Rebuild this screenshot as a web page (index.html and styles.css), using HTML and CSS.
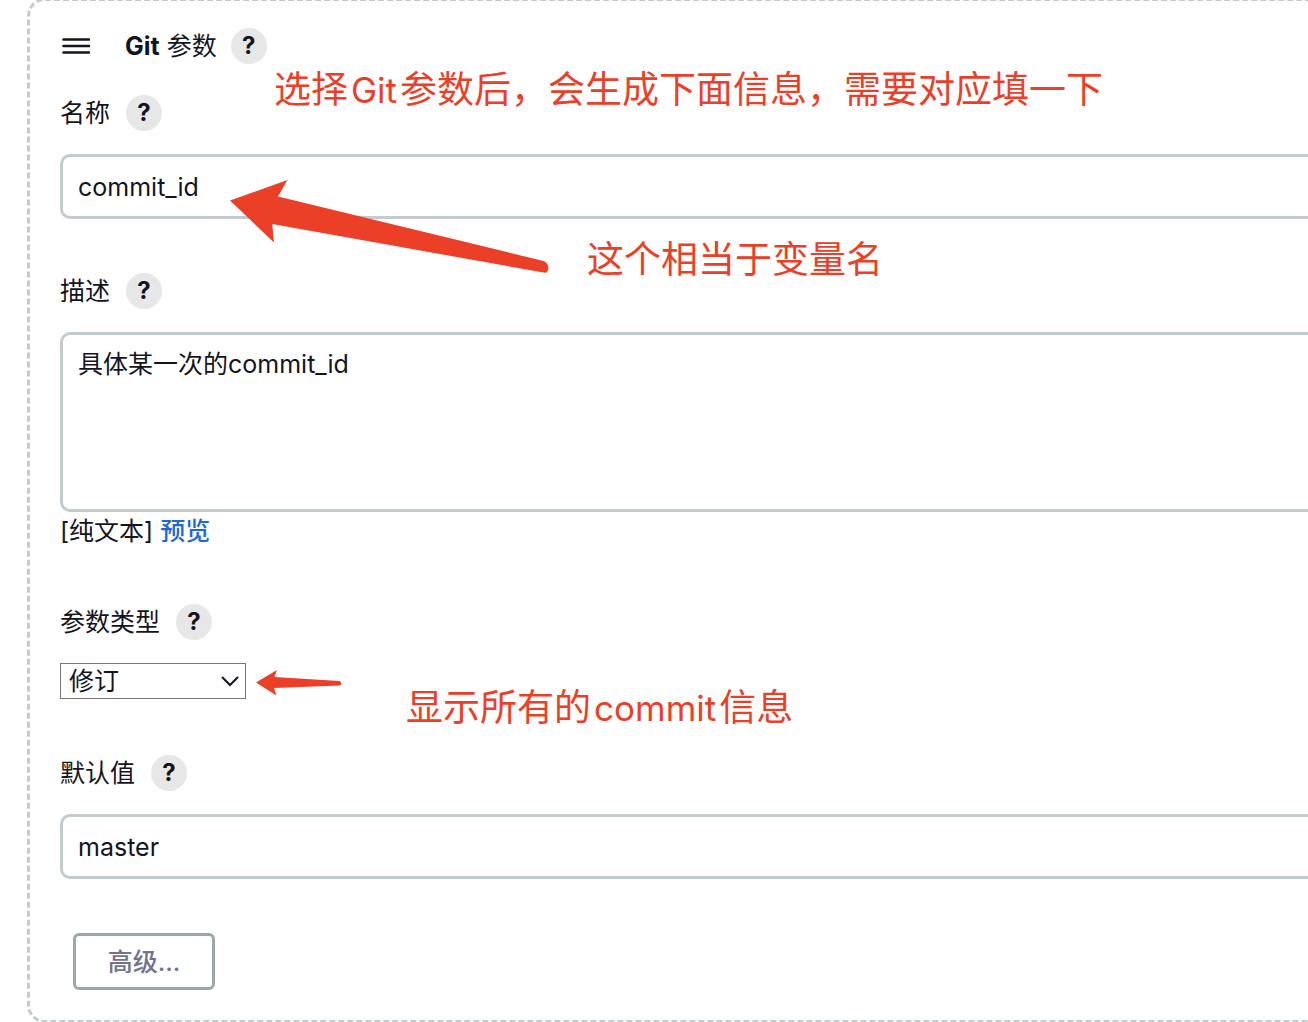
FILE: index.html
```html
<!DOCTYPE html>
<html lang="zh-CN">
<head>
    <meta charset="UTF-8">
    <meta name="viewport" content="width=device-width, initial-scale=1.0">
    <title>Git 参数</title>
    <link rel="stylesheet" href="styles.css">
</head>
<body>
    <form class="panel">
        <div class="panel-header">
            <svg class="drag-handle" width="30" height="20" viewBox="0 0 30 20" aria-hidden="true">
                <path d="M3.5 3.5H29M3.5 10H29M3.5 16.5H29" stroke="#14141f" stroke-width="2.6" stroke-linecap="round"/>
            </svg>
            <h1><b>Git</b> 参数</h1>
            <button type="button" class="help" aria-label="帮助：Git 参数">?</button>
        </div>

        <div class="field">
            <div class="field-label">
                <label for="name">名称</label>
                <button type="button" class="help" aria-label="帮助：名称">?</button>
            </div>
            <input type="text" id="name" value="commit_id">
        </div>

        <div class="field">
            <div class="field-label">
                <label for="description">描述</label>
                <button type="button" class="help" aria-label="帮助：描述">?</button>
            </div>
            <textarea id="description">具体某一次的commit_id</textarea>
            <div class="preview">[纯文本] <a href="#">预览</a></div>
        </div>

        <div class="field field-type">
            <div class="field-label">
                <label for="type">参数类型</label>
                <button type="button" class="help" aria-label="帮助：参数类型">?</button>
            </div>
            <div class="select">
                <select id="type">
                    <option>修订</option>
                </select>
                <svg class="chevron" width="18" height="12" viewBox="0 0 18 12" aria-hidden="true">
                    <path d="M1 2L9 10L17 2" fill="none" stroke="#14141f" stroke-width="2"/>
                </svg>
            </div>
        </div>

        <div class="field">
            <div class="field-label">
                <label for="default">默认值</label>
                <button type="button" class="help" aria-label="帮助：默认值">?</button>
            </div>
            <input type="text" id="default" value="master">
        </div>

        <button type="button" class="advanced">高级...</button>

        <!-- notes over the form -->
        <p class="note note-title">选择<span>Git</span>参数后，会生成下面信息，需要对应填一下</p>
        <p class="note note-name">这个相当于变量名</p>
        <p class="note note-type">显示所有的<span>commit</span>信息</p>
        <svg class="arrow arrow-name" width="320" height="94" viewBox="230 180 320 94" aria-hidden="true">
            <path d="M230 200.5L287.500 180L278 196.500L543.500 261C550 263 549.500 272.500 545 272.800L272.200 224L274 242.500Z" fill="#eb4027"/>
        </svg>
        <svg class="arrow arrow-type" width="86" height="28" viewBox="256 669 86 28" aria-hidden="true">
            <path d="M256 682.500L277 670L274.500 677L339.500 681Q343 683.500 340 685.500L274 688L276.500 695.500Z" fill="#eb4027"/>
        </svg>
    </form>
</body>
</html>
```
FILE: styles.css
```css
* {
    box-sizing: border-box;
}
body {
    margin: 0;
    display: flow-root;
    overflow: hidden;
    background: #fff;
    color: #14141f;
    font-family: Inter, "Noto Sans CJK SC", sans-serif;
    font-size: 25px;
    line-height: 36px;
}
input,
textarea,
select,
button {
    font: inherit;
    color: inherit;
}
.panel {
    position: relative;
    margin: -2px 0 0 27px;
    padding: 27px 0 30px 30px;
    border: 3px dashed #c4cbcf;
    border-right: none;
    border-radius: 18px 0 0 18px;
}
.panel-header {
    display: flex;
    align-items: center;
    margin-bottom: 31px;
}
.drag-handle {
    margin-right: 35px;
}
h1 {
    margin: 0 14px 0 0;
    font-size: 25px;
    font-weight: 400;
}
h1 b {
    font-weight: 700;
}
.help {
    width: 36px;
    height: 36px;
    padding: 0;
    border: none;
    border-radius: 50%;
    background: #e7e7e7;
    font-weight: 700;
    font-size: 24px;
    cursor: pointer;
}
.field {
    margin-bottom: 54px;
}
.field-type {
    margin-bottom: 56px;
}
.field-label {
    display: flex;
    align-items: center;
    gap: 16px;
    margin-bottom: 23px;
}
input,
textarea {
    display: block;
    width: 100%;
    height: 65px;
    padding: 0 15px;
    border: 3px solid #c4cbcf;
    border-right: none;
    border-radius: 10px 0 0 10px;
    background: #fff;
    outline: none;
}
textarea {
    height: 180px;
    padding-top: 11px;
    resize: none;
}
.preview {
    line-height: 38px;
}
.preview a {
    color: #1f67d2;
    font-weight: 500;
    text-decoration: none;
}
.select {
    display: grid;
    width: 186px;
    align-items: center;
}
.select select,
.chevron {
    grid-area: 1 / 1;
}
.select select {
    height: 36px;
    padding: 0 8px;
    border: 1px solid #76767a;
    border-radius: 0;
    background: #fff;
    line-height: 34px;
    appearance: none;
}
.chevron {
    justify-self: end;
    margin-right: 7px;
    pointer-events: none;
}
.advanced {
    display: block;
    width: 142px;
    height: 57px;
    margin-left: 13px;
    padding: 0;
    border: 3px solid #9ba6ad;
    border-radius: 6px;
    background: #fff;
    color: #73738c;
    font-weight: 500;
    cursor: pointer;
}
.note {
    position: absolute;
    margin: 0;
    color: #eb4027;
    font-size: 37px;
    line-height: 48px;
    white-space: nowrap;
}
.note span {
    margin: 0 3px;
    font-size: 35px;
}
.note-title {
    left: 244px;
    top: 65px;
}
.note-name {
    left: 557px;
    top: 235px;
}
.note-type {
    left: 376px;
    top: 683px;
}
.arrow {
    position: absolute;
    pointer-events: none;
}
.arrow-name {
    left: 200px;
    top: 179px;
}
.arrow-type {
    left: 226px;
    top: 668px;
}
```
